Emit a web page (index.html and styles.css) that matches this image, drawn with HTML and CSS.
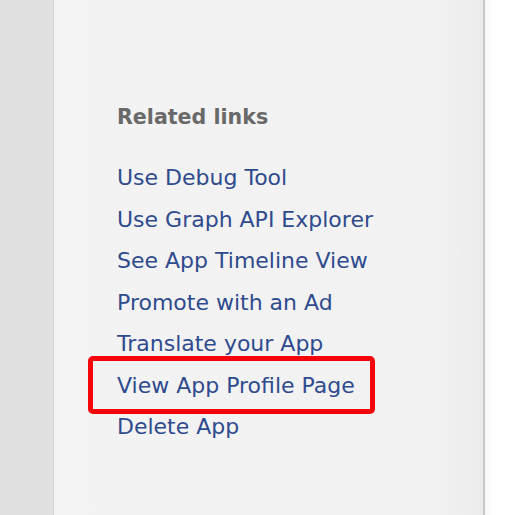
FILE: index.html
```html
<!DOCTYPE html>
<html lang="en">
<head>
    <meta charset="UTF-8">
    <meta name="viewport" content="width=device-width, initial-scale=1.0">
    <title>Related links</title>
    <link rel="stylesheet" href="styles.css">
</head>
<body>
    <div class="page">
        <div class="left-rail"></div>
        <div class="panel">
            <h2 class="panel-title">Related links</h2>
            <ul class="links">
                <li><a href="#">Use Debug Tool</a></li>
                <li><a href="#">Use Graph API Explorer</a></li>
                <li><a href="#">See App Timeline View</a></li>
                <li><a href="#">Promote with an Ad</a></li>
                <li><a href="#">Translate your App</a></li>
                <li class="highlight"><a href="#">View App Profile Page</a></li>
                <li><a href="#">Delete App</a></li>
            </ul>
        </div>
        <div class="content"></div>
    </div>
</body>
</html>
```

FILE: styles.css
```css
html, body {
    margin: 0;
    padding: 0;
    height: 100%;
}
body {
    font-family: "DejaVu Sans", "Lucida Grande", sans-serif;
    background: #fff;
}
.page {
    display: flex;
    height: 515px;
}
.left-rail {
    width: 53px;
    background-color: #e1e1e1;
    border-right: 1px solid #d4d4d4;
}
.panel {
    width: 366px;
    padding: 102px 0 0 63px;
    background: linear-gradient(to right, #f3f3f3 0%, #f2f2f2 90%, #ebebeb 100%);
    border-right: 2px solid #c9c9c9;
}
.panel-title {
    margin: 0 0 25px;
    font-size: 20.6px;
    line-height: 30px;
    font-weight: bold;
    color: #696969;
}
.links {
    list-style: none;
    margin: 0;
    padding: 0;
}
.links li {
    font-size: 22px;
    line-height: 41.5px;
}
.links a {
    color: #2f4b8e;
    text-decoration: none;
}
.highlight {
    position: relative;
}
.highlight::after {
    content: "";
    position: absolute;
    left: -29px;
    top: -9px;
    width: 277px;
    height: 48px;
    border: 5px solid #f5050a;
    border-radius: 5px;
}
.content {
    flex: 1;
    background: linear-gradient(to right, #f7f7f7 0px, #fff 7px);
}
```
